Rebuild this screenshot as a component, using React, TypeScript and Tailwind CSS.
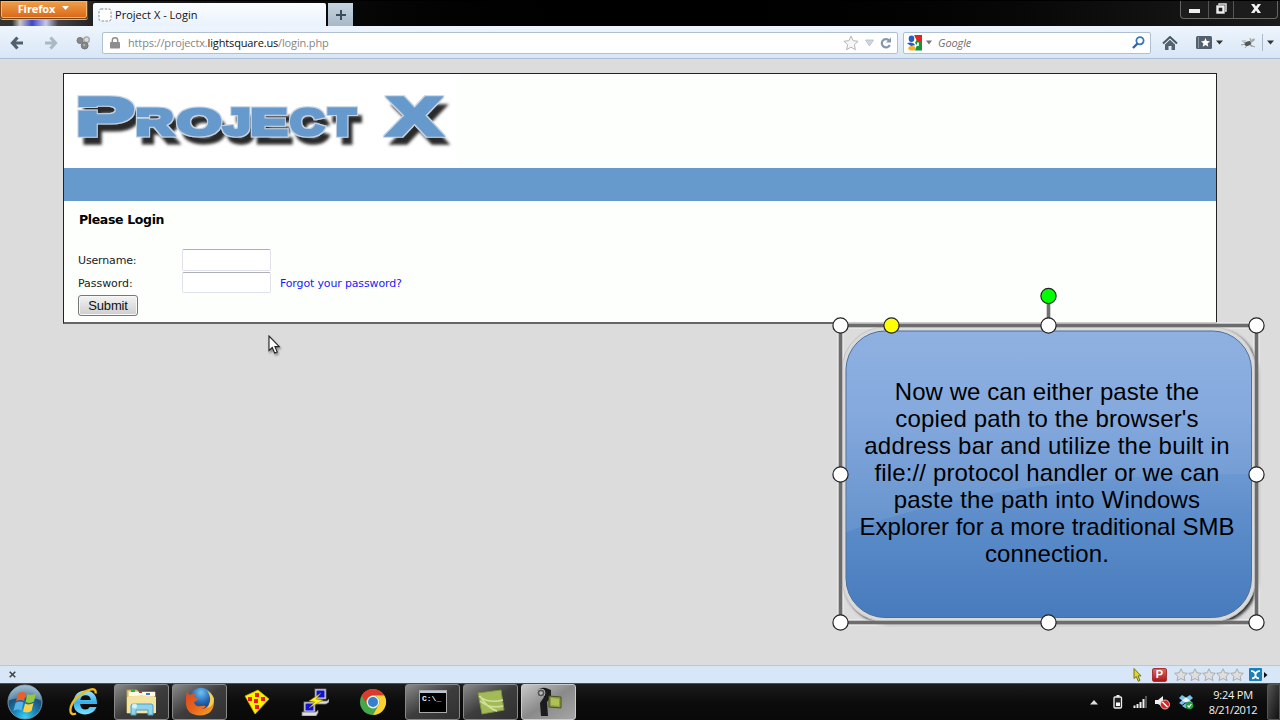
import React from "react";

const UI = "font-['Open_Sans','Noto_Sans',sans-serif]";

const logoLetters = [
  { c: "P", x: 79.5, w: 53.5, y: 96, h: 41, l: 7.3, r: 62.4, s: 4.5 },
  { c: "R", x: 137.5, w: 37.5, y: 108, h: 29, l: 7.3, r: 71.5, s: 4 },
  { c: "O", x: 177.5, w: 43.5, y: 108, h: 29, l: 4.3, r: 73.5, s: 4 },
  { c: "J", x: 222.5, w: 26.5, y: 108, h: 29, l: 2.2, r: 48.5, s: 4 },
  { c: "E", x: 252.5, w: 34.5, y: 108, h: 29, l: 7.3, r: 62.4, s: 4 },
  { c: "C", x: 290.5, w: 33.5, y: 108, h: 29, l: 4.7, r: 68, s: 4 },
  { c: "T", x: 328, w: 28.5, y: 108, h: 29, l: 2.1, r: 59, s: 4 },
  { c: "X", x: 386, w: 57, y: 96, h: 41, l: 0.5, r: 66, s: 4.5 },
];

function Logo() {
  return (
    <svg width="394" height="93" viewBox="0 0 394 93" className="block">
      <defs>
        <filter id="raised" x="-5%" y="-20%" width="112%" height="160%">
          <feMorphology in="SourceAlpha" operator="dilate" radius="0.6" result="fat" />
          <feFlood floodColor="#c3d3e4" />
          <feComposite in2="fat" operator="in" result="rim" />
          <feOffset in="SourceAlpha" dx="5" dy="8" result="off" />
          <feGaussianBlur in="off" stdDeviation="1.5" result="blur" />
          <feFlood floodColor="#2c2c2c" />
          <feComposite in2="blur" operator="in" result="shadow" />
          <feMerge><feMergeNode in="shadow" /><feMergeNode in="rim" /><feMergeNode in="SourceGraphic" /></feMerge>
        </filter>
        <mask id="slots" maskUnits="userSpaceOnUse" x="0" y="0" width="394" height="93">
          <rect width="394" height="93" fill="#fff" />
          <rect x="12" y="33" width="24" height="3.5" fill="#000" />
          <rect x="70" y="43" width="16" height="1.800" fill="#000" />
        </mask>
      </defs>
      <rect width="394" height="93" fill="#fff" />
      <g filter="url(#raised)">
        <g mask="url(#slots)" fill="#6699cc" stroke="#6699cc" fontFamily="Liberation Sans, Arial, sans-serif" fontWeight="bold" fontSize="100">
          {logoLetters.map((g) => {
            const sx = (g.w - g.s) / (g.r - g.l);
            const sy = (g.h - g.s) / 68.8;
            return (
              <text
                key={g.c}
                strokeWidth={g.s}
                style={{ vectorEffect: "non-scaling-stroke" }}
                transform={`translate(${g.x - 64 + g.s / 2 - g.l * sx} ${g.y - 74 + g.h - g.s / 2}) scale(${sx} ${sy})`}
              >
                {g.c}
              </text>
            );
          })}
        </g>
      </g>
    </svg>
  );
}

function TabStrip() {
  return (
    <div className="flex h-[26px] shrink-0 border-t border-black bg-linear-to-r from-[#2a2a2a] via-black to-[#1b1b1b]">
      <div className="h-full w-[93px] shrink-0 bg-[linear-gradient(90deg,#33332f_0,#33332f_12px,#c9c9c4_20px,#3c46c8_32px,#c7c9ee_46px,#444_58px,#222_93px)]">
        <div className="flex h-[18px] w-[88px] items-center justify-center gap-[7px] rounded-b-[3px] border border-t-0 border-[#7c4311] bg-linear-to-b from-[#eea04a] to-[#d9660f] pr-[1px] pb-[2px] shadow-[inset_0_0_0_1px_#f3b674,0_1px_0_#b8b8b8]">
          <span className={`${UI} text-[11px] leading-[16px] font-bold text-white tracking-[-0.1px]`}>Firefox</span>
          <svg width="7" height="5" viewBox="0 0 7 5"><path d="M0 0h7L3.5 4z" fill="#fff" /></svg>
        </div>
      </div>
      <div className="mt-[2px] flex w-[233px] items-center rounded-t-[2px] bg-linear-to-b from-[#fafdff] to-[#e9f2fc] pl-[5px]">
        <svg width="14" height="14" viewBox="0 0 14 14">
          <rect x="1" y="1" width="12" height="12" rx="2" fill="#fff" stroke="#8b8b8b" strokeDasharray="2.4 1.4" />
        </svg>
        <span className={`${UI} ml-[3px] text-[11px] leading-[16px] tracking-[0.02px] text-[#111] whitespace-nowrap`}>Project X - Login</span>
      </div>
      <div className="mt-[2px] ml-[2px] flex w-[25px] items-center justify-center bg-linear-to-b from-[#c6d4e0] to-[#a7b8c7]">
        <svg width="10" height="10" viewBox="0 0 10 10"><path d="M5 0v10M0 5h10" stroke="#3d4c5a" strokeWidth="2" /></svg>
      </div>
      <div className="ml-auto mr-[2px] flex h-[18px] w-[98px] rounded-b-[4px] border border-t-0 border-[#666] bg-[#1c1c1c]">
        <div className="flex w-[28px] items-center justify-center border-r border-[#555]">
          <svg width="11" height="5" viewBox="0 0 11 5" className="mt-[3px]"><rect width="11" height="4" fill="#eee" /></svg>
        </div>
        <div className="flex w-[25px] items-center justify-center border-r border-[#555]">
          <svg width="11" height="11" viewBox="0 0 11 11" className="mb-[2px]"><path d="M3 2V1h7v7H9" fill="none" stroke="#ddd" strokeWidth="1.5" /><rect x="1.5" y="3.5" width="6" height="6" fill="none" stroke="#eee" strokeWidth="2.4" /></svg>
        </div>
        <div className="flex flex-1 items-center justify-center">
          <svg width="10" height="9" viewBox="0 0 10 9" className="mb-[2px]"><path d="M0 0h3.3L5 2.5 6.700 0H10L6.800 4.400 10 9H6.700L5 6.400 3.300 9H0l3.200-4.600z" fill="#f2f2f2" /></svg>
        </div>
      </div>
    </div>
  );
}

function Caret({ w = 7, fill = "#333" }: { w?: number; fill?: string }) {
  return <svg width={w} height="5" viewBox="0 0 7 5" preserveAspectRatio="none"><path d="M0 .5h7L3.500 4.500z" fill={fill} /></svg>;
}

function NavBar() {
  return (
    <div className="flex h-[33px] shrink-0 items-center border-b border-[#a9bdd4] bg-linear-to-b from-[#eef5fd] to-[#d8e6f6] pt-px">
      <svg width="14" height="14" viewBox="0 0 14 14" className="ml-[10px]"><path d="M7.500 1.500L2.500 7l5 5.500M3 7h10" fill="none" stroke="#51606e" strokeWidth="3.200" /></svg>
      <svg width="14" height="14" viewBox="0 0 14 14" className="ml-[20px]"><path d="M6.500 1.500L11.500 7l-5 5.500M11 7H1" fill="none" stroke="#a9b9c6" strokeWidth="3.200" /></svg>
      <svg width="15" height="14" viewBox="0 0 15 14" className="ml-[18px]">
        <circle cx="4" cy="4.500" r="3" fill="#888" stroke="#777" /><circle cx="10.500" cy="3.700" r="2.800" fill="#ddd" stroke="#aaa" strokeWidth="1.500" /><circle cx="8.700" cy="9.600" r="3.400" fill="#868686" stroke="#747474" /><circle cx="8.200" cy="9" r="1" fill="#bbb" />
      </svg>
      <div className="ml-[11px] flex h-[22px] w-[796px] items-center rounded-[2px] border border-[#b0bfd1] bg-white">
        <svg width="10" height="12" viewBox="0 0 10 12" className="ml-[7px]"><path d="M2.300 6V3.500a2.700 2.700 0 015.400 0V6" fill="none" stroke="#8d8d8d" strokeWidth="1.500" /><rect y="5" width="10" height="6.500" rx=".8" fill="#8d8d8d" /></svg>
        <span className={`${UI} ml-[8px] text-[11px] leading-[16px] tracking-[-0.15px] whitespace-nowrap text-[#858585]`}>https://projectx.<span className="text-[#111]">lightsquare.us</span>/login.php</span>
        <svg width="16" height="16" viewBox="0 0 16 16" className="ml-auto"><path d="M8 1l2.100 4.700 5 .6-3.700 3.400 1 5L8 12.200l-4.400 2.500 1-5L.900 6.300l5-.6z" fill="#f7f7f7" stroke="#b5b5b5" /></svg>
        <svg width="9" height="8" viewBox="0 0 9 8" className="ml-[6px]"><path d="M.500 1h8l-4 6z" fill="#cfd6df" stroke="#b3bdca" strokeWidth=".8" /></svg>
        <svg width="12" height="12" viewBox="0 0 12 12" className="ml-[6px] mr-[5px]"><path d="M9 3.300A4.200 4.200 0 109.800 8" fill="none" stroke="#8696aa" strokeWidth="2.200" /><path d="M11 .500v5H6z" fill="#8696aa" /></svg>
      </div>
      <div className="ml-[5px] flex h-[22px] w-[248px] items-center rounded-[2px] border border-[#b0bfd1] bg-white">
        <svg width="16" height="16" viewBox="0 0 16 16" className="ml-[3px]">
          <path d="M7 0h8v15.500H7z" fill="#16943c" /><path d="M8 0h7v6l-3 1L8 4z" fill="#e8231e" /><path d="M0 8.500l7-8.500 2.500 5-1.500 3 2 2-2 5.500H0z" fill="#fff" />
          <ellipse cx="4.500" cy="3.700" rx="2.800" ry="3.200" fill="#2a5cc0" /><path d="M0 8.300c3-1.600 7-1 8 2L4 11z" fill="#2a5cc0" /><ellipse cx="5" cy="13.200" rx="3.600" ry="2.200" fill="#f9b01d" /><path d="M10 7.500h1.800v3.500H10z" fill="#fff" />
        </svg>
        <div className="ml-[3px] flex"><Caret w={6} fill="#777" /></div>
        <span className={`${UI} ml-[6px] text-[11px] leading-[16px] text-[#6f6f6f] italic tracking-[-0.1px]`}>Google</span>
        <svg width="13" height="13" viewBox="0 0 13 13" className="ml-auto mr-[5px]"><circle cx="8" cy="4.700" r="3.600" fill="none" stroke="#3a77bd" strokeWidth="1.800" /><path d="M5.500 7.500L1 12" stroke="#2f66a6" strokeWidth="2.400" /></svg>
      </div>
      <svg width="16" height="14" viewBox="0 0 16 14" className="ml-[11px]"><path d="M1 7.500L8 1l7 6.500" fill="none" stroke="#485766" strokeWidth="2" /><path d="M3 8.500l5-4.700 5 4.700V14H9.500v-4h-3v4H3z" fill="#56636f" /></svg>
      <svg width="16" height="13" viewBox="0 0 16 13" className="ml-[18px]"><rect width="16" height="13" rx="1.500" fill="#53606d" /><path d="M2.500 1v11" stroke="#87939e" /><path d="M9.500 2l1.300 3 3.200.3-2.400 2.200.7 3.200-2.800-1.700-2.800 1.700.7-3.200L5 5.300 8.200 5z" fill="#fff" /></svg>
      <div className="ml-[4px] flex"><Caret /></div>
      <svg width="15" height="12" viewBox="0 0 15 12" className="ml-[18px]"><path d="M1 4l5 3M0 8l5-1M4 11l4-5M9 1l1 4M9 8l5 2M11 10L9 7" stroke="#888" strokeWidth=".8" /><ellipse cx="7" cy="6.500" rx="3.500" ry="2.200" fill="#555" transform="rotate(-25 7 6.500)" /><ellipse cx="11.500" cy="3.500" rx="2.800" ry="1.300" fill="#aaa" transform="rotate(-30 11.500 3.500)" /><ellipse cx="3" cy="4" rx="2.500" ry="1" fill="#c5c9ce" /></svg>
      <div className="ml-[6px] h-[17px] w-px bg-[#abb8c6]" />
      <div className="ml-[4px] flex"><Caret /></div>
    </div>
  );
}

const VERD = "font-['DejaVu_Sans',Verdana,sans-serif]";

function LoginPage() {
  return (
    <div className="ml-[63px] mt-[14px] flex h-[251px] w-[1154px] flex-col border border-[#222] border-b-2 border-b-[#666] bg-[#fdfffc]">
      <div className="h-[93px] shrink-0"><Logo /></div>
      <div className="mt-px h-[33px] shrink-0 bg-[#6699cc]" />
      <div className={`${VERD} flex flex-col pl-[14px] text-[11px] leading-[16px] text-[#222]`}>
        <h1 className="mt-[11px] ml-px text-[12.500px] font-bold tracking-[-0.35px] text-black">Please Login</h1>
        <div className="mt-[21px] flex h-[22px] items-center">
          <label className="w-[104px] pt-[2px] tracking-[-0.15px]">Username:</label>
          <input className="h-[22px] w-[89px] rounded-[2px] border border-[#dfe2ec] border-t-[#aeb0b8] bg-white" />
        </div>
        <div className="mt-px flex h-[21px] items-center">
          <label className="w-[104px] pt-[2px] tracking-[-0.05px]">Password:</label>
          <input className="h-[21px] w-[89px] rounded-[2px] border border-[#dfe2ec] border-t-[#aeb0b8] bg-white" />
          <a className="ml-[9px] pt-[2px] tracking-[-0.15px] whitespace-nowrap text-[#1a1aff]">Forgot your password?</a>
        </div>
        <button className="mt-[2px] h-[21px] w-[60px] rounded-[3px] border border-[#777] bg-linear-to-b from-[#f3f3f3] to-[#cecece] pt-px font-['Liberation_Sans',Arial,sans-serif] text-[13px] leading-[18px] tracking-[-0.15px] text-[#111] shadow-[inset_0_0_0_1px_#f8f8f8]">Submit</button>
      </div>
    </div>
  );
}

const noteLines = [
  { text: "Now we can either paste the", cls: "tracking-[0.06px]" },
  { text: "copied path to the browser's", cls: "tracking-[0.14px]" },
  { text: "address bar and utilize the built in", cls: "tracking-[0.22px]" },
  { text: "file:// protocol handler or we can", cls: "tracking-[0.14px]" },
  { text: "paste the path into Windows", cls: "tracking-[0.18px]" },
  { text: "Explorer for a more traditional SMB", cls: "" },
  { text: "connection.", cls: "tracking-[0.12px]" },
];

const handles: [number, number, string][] = [
  [10, 39, "#fff"], [218, 39, "#fff"], [426, 39, "#fff"], [10, 188, "#fff"], [426, 188, "#fff"],
  [10, 336, "#fff"], [218, 336, "#fff"], [426, 336, "#fff"], [61, 39, "#ffff00"], [218, 9.500, "#00ff00"],
];

function Callout() {
  return (
    <div className="absolute left-[830px] top-[286px] h-[350px] w-[440px]">
      <svg width="440" height="350" viewBox="0 0 440 350" className="absolute inset-0">
        <defs>
          <linearGradient id="face" x1="0" y1="0" x2="0" y2="1"><stop offset="0" stopColor="#8fb1e1" /><stop offset=".3" stopColor="#80a6dc" /><stop offset=".65" stopColor="#5d8dca" /><stop offset="1" stopColor="#477bbd" /></linearGradient>
          <linearGradient id="gloss" x1="0" y1="0" x2="0" y2="1"><stop offset="0" stopColor="#fff" stopOpacity="0" /><stop offset="1" stopColor="#fff" stopOpacity=".08" /></linearGradient>
          <clipPath id="round"><rect x="16" y="45" width="405.500" height="286.500" rx="39" /></clipPath>
          <filter id="shade"><feGaussianBlur stdDeviation="1.500" /></filter>
        </defs>
        <rect x="10" y="39" width="416" height="297" fill="#dcdcdc" />
        <rect x="10.500" y="39.500" width="416" height="297" fill="none" stroke="#eee" strokeWidth="7" strokeOpacity=".7" />
        <rect x="14" y="43" width="414" height="295" rx="44" fill="#333" filter="url(#shade)" />
        <rect x="12" y="41" width="413.500" height="294.500" rx="43" fill="#d9d9d9" stroke="#c4c4c4" />
        <rect x="10.500" y="39.500" width="416" height="297" fill="none" stroke="#e6e6e6" strokeWidth="6" strokeOpacity=".5" />
        <rect x="10.500" y="39.500" width="416" height="297" fill="none" stroke="#6c6c6c" strokeWidth="3.600" />
        <path d="M218.500 10v29" stroke="#717171" strokeWidth="3.600" />
        <rect x="16" y="45" width="405.500" height="286.500" rx="39" fill="url(#face)" stroke="#4c6f9f" />
        <path d="M16 45h406v143Q180 186 16 246z" fill="url(#gloss)" clipPath="url(#round)" />
        {handles.map(([x, y, f]) => <circle key={`${x}-${y}`} cx={x + 0.5} cy={y + 0.5} r="7.600" fill={f} stroke="#222" strokeWidth="1.200" />)}
      </svg>
      <div className="relative flex flex-col items-center pt-[92px] pr-[6px] font-['Liberation_Sans',Arial,sans-serif] text-[24px] leading-[27px] text-black">
        {noteLines.map((l) => <div key={l.text} className={`whitespace-nowrap ${l.cls}`}>{l.text}</div>)}
      </div>
    </div>
  );
}

function StatusBar() {
  return (
    <div className="mt-auto flex h-[18px] shrink-0 items-center border-t border-[#b9c7d8] bg-[#d8e7f7]">
      <svg width="7" height="7" viewBox="0 0 7 7" className="ml-[9px]"><path d="M.700.700l5.600 5.600M6.300.700L.700 6.300" stroke="#444" strokeWidth="1.600" /></svg>
      <svg width="9" height="14" viewBox="0 0 9 14" className="ml-auto"><path d="M1 .500v10l2.300-2 2 4.800 1.700-.9-2-4.500H8z" fill="#e6d62a" stroke="#6b6413" strokeWidth=".9" /></svg>
      <div className="ml-[10px] flex h-[14px] w-[15px] items-center justify-center rounded-[2px] border border-[#a33] bg-linear-to-b from-[#dc6464] to-[#a91218] font-['Liberation_Sans',sans-serif] text-[11px] leading-none font-bold text-white">P</div>
      <div className="ml-[7px] flex">
        {[0, 1, 2, 3, 4].map((i) => (
          <svg key={i} width="14" height="14" viewBox="0 0 14 14"><path d="M7 .800l1.900 4 4.400.5-3.200 3 .9 4.300L7 10.500l-4 2.100.900-4.300-3.200-3 4.400-.5z" fill="#dedede" stroke="#aaa" /></svg>
        ))}
      </div>
      <svg width="13" height="13" viewBox="0 0 13 13" className="ml-[5px]"><rect width="13" height="13" rx="1" fill="#1b7fb8" /><path d="M2 3c2.500 0 4.500 1.500 4.500 4C6.500 4.500 8.500 3 11 3M3 10.300c2 0 3.500-1 3.500-3.300 0 2.300 1.500 3.300 3.500 3.300" fill="none" stroke="#fff" strokeWidth="1.700" /></svg>
      <svg width="4" height="6" viewBox="0 0 4 6" className="ml-[2px] mr-[12px]"><path d="M0 0v6l3.500-3z" fill="#111" /></svg>
    </div>
  );
}

function TaskButton({ children, light }: { children: React.ReactNode; light?: boolean }) {
  return (
    <div className={light
      ? "flex h-[36px] w-[55px] items-center justify-center rounded-[3px] border border-[#ccc] bg-linear-to-br from-[#c9c9c9] via-[#8a8a8a] to-[#a5a5a5]"
      : "flex h-[36px] w-[55px] items-center justify-center rounded-[3px] border border-[#888] bg-linear-to-br from-[#8b8b8b] via-[#3d3d3d] to-[#303030]"}>
      {children}
    </div>
  );
}

function StartOrb() {
  return (
    <svg width="36" height="36" viewBox="0 0 36 36" className="ml-[7px]">
      <defs><radialGradient id="orb" cx=".5" cy=".95" r=".9"><stop offset="0" stopColor="#35d6ff" /><stop offset=".35" stopColor="#1a86b8" /><stop offset=".7" stopColor="#1c4f7b" /><stop offset="1" stopColor="#8fb3c8" /></radialGradient></defs>
      <circle cx="18" cy="18" r="17" fill="url(#orb)" stroke="#7796a8" />
      <path d="M2 16a16 15 0 0132 0q-16-5-32 0z" fill="#a8c6d6" opacity=".45" />
      <path d="M11 9.500q4-2.500 8-.5l-2 8q-4-2-8 .5z" fill="#e8602c" /><path d="M20.500 10q4 2 8.500-.5l-2 8q-4 2.500-8.500.5z" fill="#94c83d" /><path d="M8.500 19q4-2.500 8-.5l-2 8q-4-2-8 .5z" fill="#56b4ea" /><path d="M18 19.500q4 2 8.500-.5l-2 8q-4 2.500-8.500.5z" fill="#fcd04b" />
    </svg>
  );
}

function IEIcon() {
  return (
    <svg width="30" height="30" viewBox="0 0 30 30" className="ml-[26px]">
      <defs><linearGradient id="ie" x1="0" y1="0" x2="0" y2="1"><stop offset="0" stopColor="#9ce9ff" /><stop offset=".5" stopColor="#38aee8" /><stop offset="1" stopColor="#7fe2ff" /></linearGradient></defs>
      <path d="M28 17H11.200q.3 5.500 5.300 5.600 2.900 0 4.100-2.600h7Q25 27 16.500 27.500 4.500 27 4.500 15.500 5 4 16.500 3.500 28 4 28 17zM11.300 13h10.400q-.2-4.600-5.200-4.800-4.600.2-5.200 4.800z" fill="url(#ie)" fillRule="evenodd" />
      <path d="M7 26.500C-1 30-.5 18 9 9.500 17 2.500 28-1 26.500 6.500" fill="none" stroke="#efb91f" strokeWidth="2.400" />
    </svg>
  );
}

function ExplorerIcon() {
  return (
    <svg width="32" height="28" viewBox="0 0 32 28">
      <path d="M1 2h10l2 2h16v21H1z" fill="#e9d58a" stroke="#b69d4a" /><path d="M3 4h26v4H3z" fill="#fffbe8" /><path d="M5 1h4v3H5z" fill="#2eb135" /><path d="M13 3h3v2h-3z" fill="#cf3329" /><path d="M20 5h4v2h-4z" fill="#3579cf" />
      <path d="M1 9l15-2 14 2v16H1z" fill="#f2e3a2" />
      <path d="M5 27V18q0-2 2-2h18q2 0 2 2v9h-5v-5H10v5z" fill="#8fd3ed" stroke="#4f9fc5" /><circle cx="8.500" cy="18" r="2.500" fill="#e9faff" opacity=".8" />
    </svg>
  );
}

function FirefoxIcon() {
  return (
    <svg width="30" height="30" viewBox="0 0 30 30">
      <defs><radialGradient id="globe" cx=".5" cy=".2" r=".8"><stop offset="0" stopColor="#6fc2f2" /><stop offset=".5" stopColor="#2467b4" /><stop offset="1" stopColor="#13265f" /></radialGradient>
        <linearGradient id="fox" x1="0" y1="0" x2="1" y2="1"><stop offset="0" stopColor="#d9481c" /><stop offset=".5" stopColor="#e8641c" /><stop offset="1" stopColor="#f4a928" /></linearGradient></defs>
      <circle cx="16" cy="13" r="12.300" fill="url(#globe)" />
      <path d="M2 4q1 3 3 4 3-2 6-1l-2 3 4 2q-1 2-4 3 1 5 7 4 3-.5 5 0-2 3-5 3 7 0 9-8 1-4 0-9 4 5 4 11-1 12-14 12.500Q2 28 1 17 .500 10 2 4z" fill="url(#fox)" />
      <path d="M22 3.500q4 5.500 3 11.500-1 4-3 6 7-1 7-9.500Q27.500 7 22 3.500z" fill="#f6cf51" />
    </svg>
  );
}

function Dice() {
  return (
    <svg width="28" height="28" viewBox="0 0 28 28" className="ml-[16px]">
      <path d="M2 8L15 2l11 9L12 26z" fill="#fff200" stroke="#b9ac00" strokeWidth=".8" />
      <g fill="#f01818"><rect x="12" y="5" width="4" height="4" /><rect x="5" y="9" width="4" height="4" /><rect x="18" y="9" width="4" height="4" /><rect x="11" y="11" width="4" height="4" /><rect x="12" y="17" width="4" height="4" /></g>
    </svg>
  );
}

function Putty() {
  return (
    <svg width="28" height="28" viewBox="0 0 28 28" className="ml-[30px]">
      <g stroke="#777" strokeWidth=".8"><rect x="14" y="1" width="11" height="10" fill="#ddd" /><path d="M13 13h13l2-2v3l-3 2H13z" fill="#ddd" /><rect x="3" y="14" width="11" height="10" fill="#ddd" /><path d="M1 24h14l2-2v3l-2 3H1z" fill="#ddd" /></g>
      <path d="M15.500 2.500h8v7h-8zM4.500 15.500h8v7h-8z" fill="#1010d8" /><path d="M20 5l-12 8 6 1-6 6 14-8-7-1z" fill="#ffec18" stroke="#9b8b00" strokeWidth=".5" />
    </svg>
  );
}

function ChromeIcon() {
  return (
    <svg width="28" height="28" viewBox="0 0 28 28" className="ml-[30px]">
      <circle cx="14" cy="14" r="13" fill="#45a64a" /><path d="M2.700 7.500A13 13 0 0125.300 7.500H14A6.500 6.500 0 008.400 17.200z" fill="#dc3b2c" /><path d="M25.300 7.500A13 13 0 0114 27l5.600-9.700A6.500 6.500 0 0014 7.500z" fill="#fdd22f" /><circle cx="14" cy="14" r="6.400" fill="#eee" /><circle cx="14" cy="14" r="5" fill="#377fcb" />
    </svg>
  );
}

function Tray() {
  return (
    <>
      <svg width="8" height="5" viewBox="0 0 8 5" className="ml-auto"><path d="M0 4.500h8L4 0z" fill="#ddd" /></svg>
      <svg width="10" height="14" viewBox="0 0 10 14" className="ml-[15px]"><path d="M3.500 0h3v2h-3z" fill="#eee" /><rect x="1" y="2" width="7.500" height="11" rx="1" fill="#222" stroke="#eee" strokeWidth="1.300" /><path d="M3 7.500h4V11H3z" fill="#fff" /></svg>
      <svg width="14" height="12" viewBox="0 0 14 12" className="ml-[10px]"><path d="M1.500 12V9.500M4.500 12V8M7.500 12V6M10.500 12V3" stroke="#eee" strokeWidth="2" /><path d="M13 12V0" stroke="#666" strokeWidth="1.600" /></svg>
      <svg width="15" height="15" viewBox="0 0 15 15" className="ml-[8px]"><path d="M0 5h3l5-4v11L3 9H0z" fill="#eee" /><circle cx="10" cy="9.500" r="4.500" fill="#d92121" stroke="#f7d8d8" strokeWidth=".8" /><path d="M7.500 7l5 5" stroke="#fff" strokeWidth="1.500" /></svg>
      <svg width="16" height="16" viewBox="0 0 16 16" className="ml-[8px]"><path d="M4 1l4 2.500L12 1l3 3-3 2.500L15 9l-3 2-4-3-4 3-3-2 3-2.500L1 4zM4 12l4-3 4 3-4 2.500z" fill="#78c2ee" /><path d="M8 3.500l4 3-4 2-4-2z" fill="#eaf8ff" /><circle cx="11.500" cy="11.500" r="3.800" fill="#279b3b" /><path d="M9.600 11.500l1.400 1.500 2.400-3" fill="none" stroke="#fff" strokeWidth="1.200" /></svg>
      <div className={`${UI} ml-[13px] flex w-[52px] flex-col items-center text-[11px] leading-[15.500px] text-[#f2f2f2]`}>
        <span className="whitespace-nowrap tracking-[-0.2px]">9:24 PM</span>
        <span className="whitespace-nowrap tracking-[-0.4px]">8/21/2012</span>
      </div>
      <div className="ml-[8px] h-[36px] w-[13px] rounded-l-[2px] border border-[#555] bg-linear-to-br from-[#555] to-[#111]" />
    </>
  );
}

function Taskbar() {
  return (
    <div className="flex h-[37px] shrink-0 items-center border-t border-[#4c5159] bg-linear-to-b from-[#1c1c1c] via-[#0c0c0c] to-[#090909]">
      <StartOrb />
      <IEIcon />
      <div className="ml-[15px] flex gap-[3px]">
        <TaskButton><ExplorerIcon /></TaskButton>
        <TaskButton><FirefoxIcon /></TaskButton>
      </div>
      <Dice />
      <Putty />
      <ChromeIcon />
      <div className="ml-[18px] flex gap-[3px]">
        <TaskButton>
          <svg width="28" height="24" viewBox="0 0 28 24"><rect x=".5" y=".5" width="27" height="22" fill="#000" stroke="#aaa" /><path d="M1 1h26v2H1z" fill="#b9c6d6" /><text x="3" y="11" fontSize="8" fontWeight="bold" fontFamily="Liberation Mono, monospace" fill="#eee">C:\_</text></svg>
        </TaskButton>
        <TaskButton>
          <svg width="28" height="28" viewBox="0 0 28 28"><path d="M1 5l23-3 3 20-22 4z" fill="#a2ba58" stroke="#7c9340" /><path d="M2 8q9 8 24 4M3 13q9 8 23 5M3 8q7 12 17 15" fill="none" stroke="#d2e09b" strokeWidth="1.500" /></svg>
        </TaskButton>
        <TaskButton light>
          <svg width="28" height="30" viewBox="0 0 28 30"><path d="M2 5q2-5 9-4l5 2v7l-4 5 1 14H6L5 16l4-6-5-1z" fill="#1c1c1c" /><circle cx="6" cy="6" r="4" fill="#555" stroke="#aaa" /><circle cx="6" cy="6" r="1.800" fill="#bbb" /><path d="M14 9l12 1v11l-12-1z" fill="#8d9c43" stroke="#49521d" /><path d="M16 11l8 1v7l-8-1z" fill="#b1c054" /></svg>
        </TaskButton>
      </div>
      <Tray />
    </div>
  );
}

export default function App() {
  return (
    <div className="relative flex h-[720px] w-[1280px] flex-col overflow-hidden bg-[#dcdcdc]">
      <TabStrip />
      <NavBar />
      <LoginPage />
      <StatusBar />
      <Taskbar />
      <Callout />
      <svg width="14" height="20" viewBox="0 0 14 20" className="absolute left-[268px] top-[335px] drop-shadow-[1px_2px_1px_rgba(0,0,0,0.4)]"><path d="M1 1v14.500l3.300-3L6.600 18l2.600-1.100L6.900 11.600h4.400z" fill="#fff" stroke="#222" strokeWidth="1.100" /></svg>
    </div>
  );
}
